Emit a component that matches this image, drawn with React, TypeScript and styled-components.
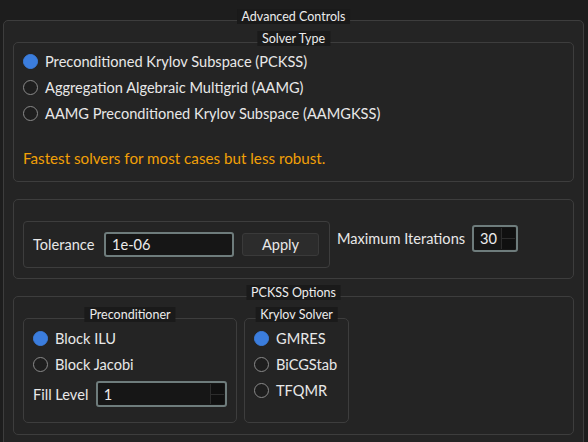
import React from 'react'
import styled, { createGlobalStyle } from 'styled-components'

const GlobalStyle = createGlobalStyle`
  html, body {
    margin: 0;
    padding: 0;
    background: #1d1d1d;
  }
  body {
    font-family: Lato, "Noto Sans", sans-serif;
    color: #e6e6e6;
  }
  * {
    box-sizing: border-box;
  }
`

const Page = styled.div`
  width: 588px;
  height: 442px;
  overflow: hidden;
  padding: 20px 4px 0 3px;
`

// Qt-like group box; the title sits over the top border line
const Group = styled.section<{ $pad: string; $width?: number; $height?: number }>`
  position: relative;
  border: 1px solid #3d3d3d;
  border-radius: 5px;
  padding: ${(p) => p.$pad};
  ${(p) => (p.$width ? `width: ${p.$width}px;` : '')}
  ${(p) => (p.$height ? `height: ${p.$height}px;` : '')}
`

const Outer = styled(Group)`
  background: #242424;
  height: 460px;
  display: flex;
  flex-direction: column;
  gap: 17px;
`

const Title = styled.div`
  position: absolute;
  top: -12px;
  left: 50%;
  transform: translateX(-50%);
  height: 15px;
  padding: 0 5px;
  background: #1a1a1a;
  font-size: 12.5px;
  line-height: 15px;
  white-space: nowrap;
  color: #ececec;
`

const RadioRow = styled.label`
  display: flex;
  align-items: center;
  gap: 7px;
  height: 26px;
  font-size: 14.6px;
  color: #e8e8e8;
  white-space: nowrap;
`

const Dot = styled.span<{ $on?: boolean }>`
  width: 15px;
  height: 15px;
  border-radius: 50%;
  flex: none;
  background: ${(p) => (p.$on ? '#3b7ddd' : '#1e1e1e')};
  border: 1px solid ${(p) => (p.$on ? '#3b7ddd' : '#8a8a8a')};
`

const Note = styled.div`
  margin-top: 22px;
  font-size: 15.2px;
  line-height: 20px;
  color: #f2a007;
`

const Row = styled.div<{ $gap: number }>`
  display: flex;
  align-items: flex-start;
  gap: ${(p) => p.$gap}px;
`

const InlineGroup = styled(Group)`
  display: flex;
  align-items: center;
  gap: 7px;
  border-radius: 4px;
`

const Field = styled.div<{ $top?: number }>`
  display: flex;
  align-items: center;
  gap: 7px;
  margin-top: ${(p) => p.$top ?? 0}px;
`

const Label = styled.span<{ $width?: number }>`
  font-size: 14.6px;
  color: #e8e8e8;
  white-space: nowrap;
  ${(p) => (p.$width ? `width: ${p.$width}px;` : '')}
`

const TextBox = styled.div<{ $width: number; $height: number }>`
  display: flex;
  align-items: center;
  width: ${(p) => p.$width}px;
  height: ${(p) => p.$height}px;
  padding-left: 6px;
  background: #161616;
  border: 2px solid #6e7c7c;
  border-radius: 3px;
  font-size: 14.6px;
  color: #ececec;
`

const Value = styled.span`
  flex: 1;
`

const Spin = styled.div`
  align-self: stretch;
  display: flex;
  flex-direction: column;
  width: 14px;
  margin: 1px 1px 1px 0;
`

const SpinHalf = styled.div`
  flex: 1;
  background: #101010;
  border-left: 1px solid #2c2c2c;
  & + & {
    border-top: 1px solid #2c2c2c;
  }
`

const Button = styled.button`
  width: 77px;
  height: 23px;
  margin-left: 1px;
  background: #2c2c2c;
  border: 1px solid #3a3a3a;
  border-radius: 3px;
  font-family: inherit;
  font-size: 14.6px;
  color: #e8e8e8;
  padding: 0;
`

const SpinBox = ({ value, width, height }: { value: string; width: number; height: number }) => (
  <TextBox $width={width} $height={height}>
    <Value>{value}</Value>
    <Spin>
      <SpinHalf />
      <SpinHalf />
    </Spin>
  </TextBox>
)

const Radio = ({ label, on }: { label: string; on?: boolean }) => (
  <RadioRow>
    <Dot $on={on} />
    {label}
  </RadioRow>
)

export default function App() {
  return (
    <>
      <GlobalStyle />
      <Page>
        <Outer $pad="21px 9px 0 9px">
          <Title>Advanced Controls</Title>

          <Group $pad="5px 9px 0 9px" $height={140}>
            <Title>Solver Type</Title>
            <Radio on label="Preconditioned Krylov Subspace (PCKSS)" />
            <Radio label="Aggregation Algebraic Multigrid (AAMG)" />
            <Radio label="AAMG Preconditioned Krylov Subspace (AAMGKSS)" />
            <Note>Fastest solvers for most cases but less robust.</Note>
          </Group>

          <Group $pad="21px 9px 0 9px" $height={80}>
            <Row $gap={7}>
              <InlineGroup $pad="0 10px 0 9px" $width={307} $height={47}>
                <Label $width={64}>Tolerance</Label>
                <TextBox $width={130} $height={25}>1e-06</TextBox>
                <Button>Apply</Button>
              </InlineGroup>
              <Field $top={4}>
                <Label>Maximum Iterations</Label>
                <SpinBox value="30" width={46} height={27} />
              </Field>
            </Row>
          </Group>

          <Group $pad="21px 9px 0 9px" $height={139}>
            <Title>PCKSS Options</Title>
            <Row $gap={7}>
              <Group $pad="6px 9px 0 9px" $width={214} $height={105}>
                <Title>Preconditioner</Title>
                <Radio on label="Block ILU" />
                <Radio label="Block Jacobi" />
                <Field $top={4}>
                  <Label $width={56}>Fill Level</Label>
                  <SpinBox value="1" width={132} height={26} />
                </Field>
              </Group>
              <Group $pad="6px 9px 0 9px" $width={105} $height={105}>
                <Title>Krylov Solver</Title>
                <Radio on label="GMRES" />
                <Radio label="BiCGStab" />
                <Radio label="TFQMR" />
              </Group>
            </Row>
          </Group>
        </Outer>
      </Page>
    </>
  )
}
